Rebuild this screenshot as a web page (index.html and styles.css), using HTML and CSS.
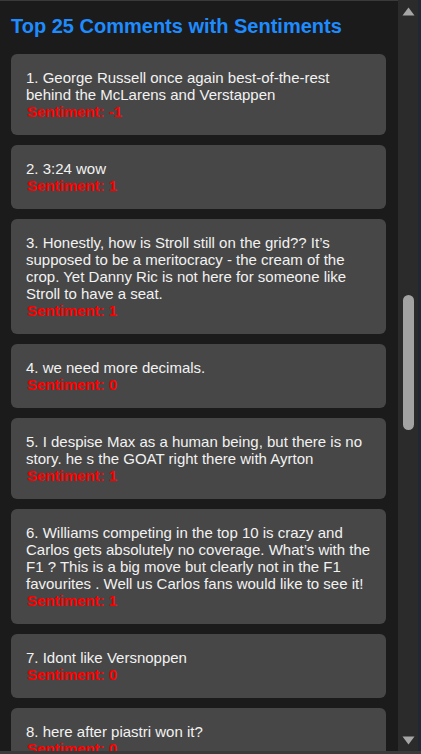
FILE: index.html
```html
<!DOCTYPE html>
<html lang="en">
<head>
<meta charset="utf-8">
<title>Top 25 Comments with Sentiments</title>
<link rel="stylesheet" href="styles.css">
</head>
<body>
<div class="window">
  <main class="content">
    <h2 class="title">Top 25 Comments with Sentiments</h2>
    <ul class="list">
      <li class="card">1. George Russell once again best-of-the-rest behind the McLarens and Verstappen<span class="sentiment">Sentiment: -1</span></li>
      <li class="card">2. 3:24 wow<span class="sentiment">Sentiment: 1</span></li>
      <li class="card">3. Honestly, how is Stroll still on the grid?? It’s supposed to be a meritocracy - the cream of the crop. Yet Danny Ric is not here for someone like Stroll to have a seat.<span class="sentiment">Sentiment: 1</span></li>
      <li class="card">4. we need more decimals.<span class="sentiment">Sentiment: 0</span></li>
      <li class="card">5. I despise Max as a human being, but there is no story. he s the GOAT right there with Ayrton<span class="sentiment">Sentiment: 1</span></li>
      <li class="card">6. Williams competing in the top 10 is crazy and Carlos gets absolutely no coverage. What’s with the F1 ? This is a big move but clearly not in the F1 favourites . Well us Carlos fans would like to see it!<span class="sentiment">Sentiment: 1</span></li>
      <li class="card">7. Idont like Versnoppen<span class="sentiment">Sentiment: 0</span></li>
      <li class="card">8. here after piastri won it?<span class="sentiment">Sentiment: 0</span></li>
    </ul>
  </main>
  <div class="scrollbar" aria-hidden="true">
    <div class="sb-btn">
      <svg width="13" height="9" viewBox="0 0 13 9"><path d="M6.5 0.5 L12.5 8.5 L0.5 8.5 Z" fill="#a6a6a6"/></svg>
    </div>
    <div class="sb-track"><div class="sb-thumb"></div></div>
    <div class="sb-btn">
      <svg width="13" height="9" viewBox="0 0 13 9"><path d="M0.5 0.5 L12.5 0.5 L6.5 8.5 Z" fill="#a6a6a6"/></svg>
    </div>
  </div>
  <div class="edge"></div>
</div>
<div class="bottom-strip"></div>
</body>
</html>
```

FILE: styles.css
```css
html, body {
  margin: 0;
  padding: 0;
  height: 754px;
  overflow: hidden;
  background: #1b1b1b;
}

body {
  display: flex;
  flex-direction: column;
  font-family: "Liberation Sans", Arial, sans-serif;
}

.window {
  display: flex;
  height: 751px;
  border-top: 1px solid #3a3a3a;
  box-sizing: border-box;
}

.content {
  flex: 1;
  min-width: 0;
  overflow: hidden;
  padding: 14px 12px 0 11px;
  background: #1b1b1b;
}

.title {
  margin: 0 0 16px;
  font-size: 20px;
  line-height: 23px;
  font-weight: bold;
  color: #1e8cff;
}

.list {
  list-style: none;
  margin: 0;
  padding: 0;
  display: flex;
  flex-direction: column;
  gap: 10px;
}

.card {
  background: #474747;
  border-radius: 6px;
  padding: 15px 15px;
  font-size: 15px;
  line-height: 17px;
  color: #f2f2f2;
}

.sentiment {
  display: block;
  padding-left: 1px;
  color: #ff0000;
  font-weight: bold;
}

.scrollbar {
  width: 20px;
  display: flex;
  flex-direction: column;
  background: #2b2b2b;
  margin-top: -1px;
}

.sb-btn {
  height: 22px;
  display: flex;
  align-items: center;
  justify-content: center;
}

.sb-track {
  flex: 1;
}

.sb-thumb {
  width: 11px;
  height: 135px;
  margin: 273px auto 0;
  border-radius: 6px;
  background: #a3a3a3;
}

.edge {
  width: 3px;
  background: #1f2833;
  margin-top: -1px;
}

.bottom-strip {
  height: 3px;
  background: #3a3a3a;
}
```
